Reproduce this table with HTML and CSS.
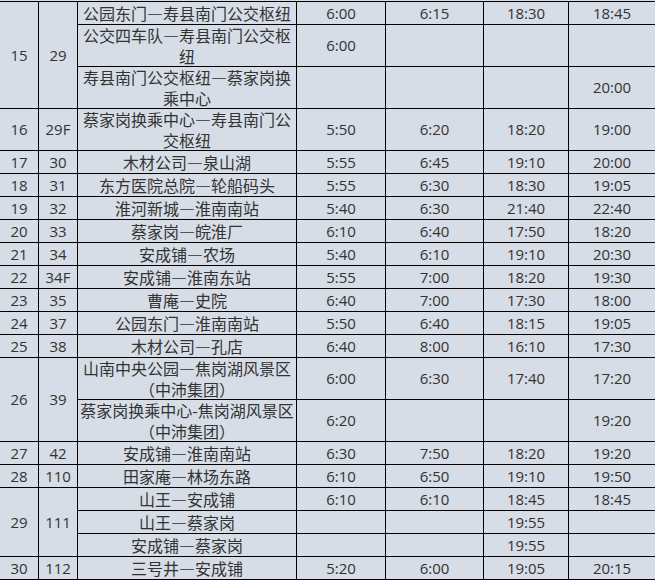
FILE: index.html
```html
<!DOCTYPE html>
<html lang="zh-CN">
<head>
<meta charset="utf-8">
<title>公交线路时刻表</title>
<link rel="stylesheet" href="styles.css">
</head>
<body>
<div class="sheet">
<table class="timetable">
  <colgroup>
    <col class="c-no"><col class="c-line"><col class="c-route"><col class="c-t1"><col class="c-t2"><col class="c-t3"><col class="c-t4">
  </colgroup>
  <tbody>
    <tr><td rowspan="3">15</td><td rowspan="3">29</td><td class="route">公园东门—寿县南门公交枢纽</td><td>6:00</td><td>6:15</td><td>18:30</td><td>18:45</td></tr>
    <tr class="two"><td class="route">公交四车队—寿县南门公交枢纽</td><td>6:00</td><td></td><td></td><td></td></tr>
    <tr class="two"><td class="route">寿县南门公交枢纽—蔡家岗换乘中心</td><td></td><td></td><td></td><td>20:00</td></tr>
    <tr class="two"><td>16</td><td>29F</td><td class="route">蔡家岗换乘中心—寿县南门公交枢纽</td><td>5:50</td><td>6:20</td><td>18:20</td><td>19:00</td></tr>
    <tr><td>17</td><td>30</td><td class="route">木材公司—泉山湖</td><td>5:55</td><td>6:45</td><td>19:10</td><td>20:00</td></tr>
    <tr><td>18</td><td>31</td><td class="route">东方医院总院—轮船码头</td><td>5:55</td><td>6:30</td><td>18:30</td><td>19:05</td></tr>
    <tr><td>19</td><td>32</td><td class="route">淮河新城—淮南南站</td><td>5:40</td><td>6:30</td><td>21:40</td><td>22:40</td></tr>
    <tr><td>20</td><td>33</td><td class="route">蔡家岗—皖淮厂</td><td>6:10</td><td>6:40</td><td>17:50</td><td>18:20</td></tr>
    <tr><td>21</td><td>34</td><td class="route">安成铺—农场</td><td>5:40</td><td>6:10</td><td>19:10</td><td>20:30</td></tr>
    <tr><td>22</td><td>34F</td><td class="route">安成铺—淮南东站</td><td>5:55</td><td>7:00</td><td>18:20</td><td>19:30</td></tr>
    <tr><td>23</td><td>35</td><td class="route">曹庵—史院</td><td>6:40</td><td>7:00</td><td>17:30</td><td>18:00</td></tr>
    <tr><td>24</td><td>37</td><td class="route">公园东门—淮南南站</td><td>5:50</td><td>6:40</td><td>18:15</td><td>19:05</td></tr>
    <tr><td>25</td><td>38</td><td class="route">木材公司—孔店</td><td>6:40</td><td>8:00</td><td>16:10</td><td>17:30</td></tr>
    <tr class="two"><td rowspan="2">26</td><td rowspan="2">39</td><td class="route">山南中央公园—焦岗湖风景区（中沛集团）</td><td>6:00</td><td>6:30</td><td>17:40</td><td>17:20</td></tr>
    <tr class="two"><td class="route">蔡家岗换乘中心-焦岗湖风景区（中沛集团）</td><td>6:20</td><td></td><td></td><td>19:20</td></tr>
    <tr><td>27</td><td>42</td><td class="route">安成铺—淮南南站</td><td>6:30</td><td>7:50</td><td>18:20</td><td>19:20</td></tr>
    <tr><td>28</td><td>110</td><td class="route">田家庵—林场东路</td><td>6:10</td><td>6:50</td><td>19:10</td><td>19:50</td></tr>
    <tr><td rowspan="3">29</td><td rowspan="3">111</td><td class="route">山王—安成铺</td><td>6:10</td><td>6:10</td><td>18:45</td><td>18:45</td></tr>
    <tr><td class="route">山王—蔡家岗</td><td></td><td></td><td>19:55</td><td></td></tr>
    <tr><td class="route">安成铺—蔡家岗</td><td></td><td></td><td>19:55</td><td></td></tr>
    <tr><td>30</td><td>112</td><td class="route">三号井—安成铺</td><td>5:20</td><td>6:00</td><td>19:05</td><td>20:15</td></tr>
  </tbody>
</table>
</div>
</body>
</html>
```

FILE: styles.css
```css
html, body {
  margin: 0;
  padding: 0;
  background: #ffffff;
}

.sheet {
  background: #d6dde6;
  padding-top: 1px;
  overflow: hidden;
  width: 655px;
}

.timetable {
  border-collapse: collapse;
  table-layout: fixed;
  width: 656px;
  margin-left: -1px;
  background: #d6dde6;
  color: #333333;
  font-family: "Open Sans", "Noto Sans CJK SC", sans-serif;
  font-size: 15px;
}

.c-no { width: 39px; }
.c-line { width: 39px; }
.c-route { width: 219px; }
.c-t1 { width: 89px; }
.c-t2 { width: 98px; }
.c-t3 { width: 85px; }
.c-t4 { width: 87px; }

.timetable td {
  border: 1px solid #000000;
  padding: 0 1px;
  height: 22px;
  line-height: 20.5px;
  text-align: center;
  vertical-align: middle;
}

.timetable tr.two td {
  height: 41px;
}

.timetable td.route {
  font-family: "Noto Sans CJK SC", sans-serif;
  font-size: 16px;
  text-spacing-trim: space-all;
}
```
